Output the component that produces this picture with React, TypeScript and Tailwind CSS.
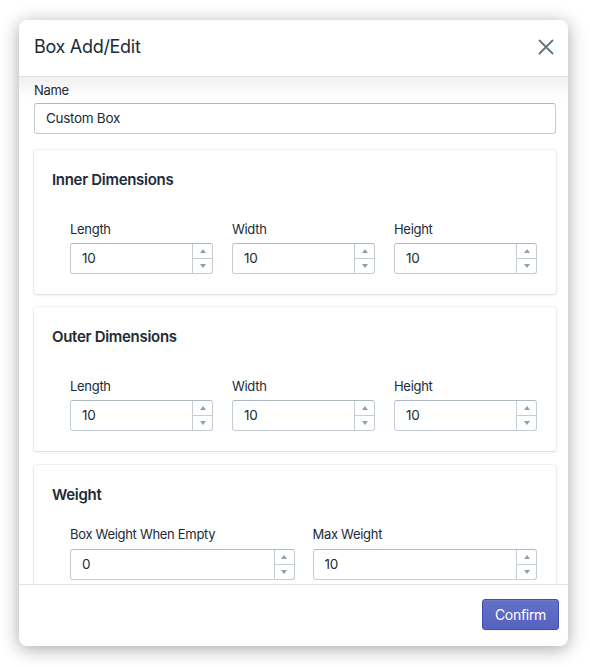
import React from "react";

function NumberField({ label, value, gap }: { label: string; value: string; gap?: string }) {
  return (
    <div className="flex flex-col min-w-0">
      <div className={"text-[13px] leading-[16px] text-[#212b36] " + (gap ?? "mb-[6px]")}>{label}</div>
      <div className="flex h-[31px] rounded-[3px] border border-[#c4cdd5] border-t-[#aeb9c1] bg-white">
        <div className="flex-1 min-w-0 flex items-center pl-[11px] text-[13.5px] text-[#212b36]">{value}</div>
        <div className="w-[20px] flex flex-col border-l border-[#c4cdd5]">
          <div className="flex-1 flex items-center justify-center border-b border-[#c4cdd5]">
            <svg width="6" height="4" viewBox="0 0 6 4"><path d="M0 4 L3 0 L6 4 Z" fill="#919eab" /></svg>
          </div>
          <div className="flex-1 flex items-center justify-center">
            <svg width="6" height="4" viewBox="0 0 6 4"><path d="M0 0 L3 4 L6 0 Z" fill="#919eab" /></svg>
          </div>
        </div>
      </div>
    </div>
  );
}

function Card({
  title,
  children,
  className,
  bodyGap,
}: {
  title: string;
  children: React.ReactNode;
  className?: string;
  bodyGap?: string;
}) {
  return (
    <div
      className={
        "bg-white rounded-[3px] shadow-[0_0_0_1px_rgba(63,63,68,0.05),0_1px_3px_0_rgba(63,63,68,0.15)] pt-[20px] pb-[20px] pl-[18px] pr-[19px] " +
        (className ?? "")
      }
    >
      <div className="text-[15px] leading-[20px] font-semibold text-[#212b36] tracking-[-0.3px]">{title}</div>
      <div className={"pl-[18px] " + (bodyGap ?? "mt-[31px]")}>{children}</div>
    </div>
  );
}

export default function App() {
  return (
    <div
      className="w-[590px] h-[667px] bg-white pt-[20px] pl-[19px] tracking-[-0.3px]"
      style={{ fontFamily: "Inter, 'Noto Sans', 'Liberation Sans', sans-serif" }}
    >
      <div className="w-[549px] h-[626px] bg-white rounded-[8px] shadow-[0_3px_18px_rgba(0,0,0,0.35)] flex flex-col overflow-hidden">
        <div className="h-[57px] shrink-0 border-b border-[#dfe3e8] flex items-center justify-between pl-[15px] pr-[14px]">
          <div className="text-[18px] leading-[24px] text-[#212b36] -mt-[2px]">Box Add/Edit</div>
          <svg width="16" height="16" viewBox="0 0 16 16" className="-mt-[2px]">
            <path d="M1.5 1.5 L14.5 14.5 M14.5 1.5 L1.5 14.5" stroke="#637381" strokeWidth="1.8" strokeLinecap="round" />
          </svg>
        </div>
        <div className="relative flex-1 overflow-hidden">
          <div className="absolute top-0 left-0 right-0 h-[22px] bg-gradient-to-b from-[rgba(0,0,0,0.06)] to-transparent pointer-events-none" />
          <div className="pt-[5px] pl-[15px] pr-[12px]">
            <div className="text-[13px] leading-[16px] text-[#212b36] mb-[5px]">Name</div>
            <div className="h-[31px] rounded-[3px] border border-[#c4cdd5] border-t-[#aeb9c1] flex items-center pl-[11px] text-[13.5px] text-[#212b36]">
              Custom Box
            </div>
            <Card title="Inner Dimensions" className="mt-[16px]">
              <div className="grid grid-cols-3 gap-[19px]">
                <NumberField label="Length" value="10" />
                <NumberField label="Width" value="10" />
                <NumberField label="Height" value="10" />
              </div>
            </Card>
            <Card title="Outer Dimensions" className="mt-[13px]">
              <div className="grid grid-cols-3 gap-[19px]">
                <NumberField label="Length" value="10" />
                <NumberField label="Width" value="10" />
                <NumberField label="Height" value="10" />
              </div>
            </Card>
            <Card title="Weight" className="mt-[14px]" bodyGap="mt-[21px]">
              <div className="grid grid-cols-2 gap-[18px]">
                <NumberField label="Box Weight When Empty" value="0" gap="mb-[7px]" />
                <NumberField label="Max Weight" value="10" gap="mb-[7px]" />
              </div>
            </Card>
          </div>
        </div>
        <div className="h-[62px] shrink-0 border-t border-[#dfe3e8] flex justify-end pt-[14px] pr-[9px]">
          <button className="h-[31px] w-[77px] rounded-[3px] border border-[#3f4eae] bg-gradient-to-b from-[#6371c7] to-[#5563c1] text-white text-[14px] shadow-[inset_0_1px_0_0_#6f7bcb,0_1px_0_0_rgba(22,29,37,0.05)]">
            Confirm
          </button>
        </div>
      </div>
    </div>
  );
}
